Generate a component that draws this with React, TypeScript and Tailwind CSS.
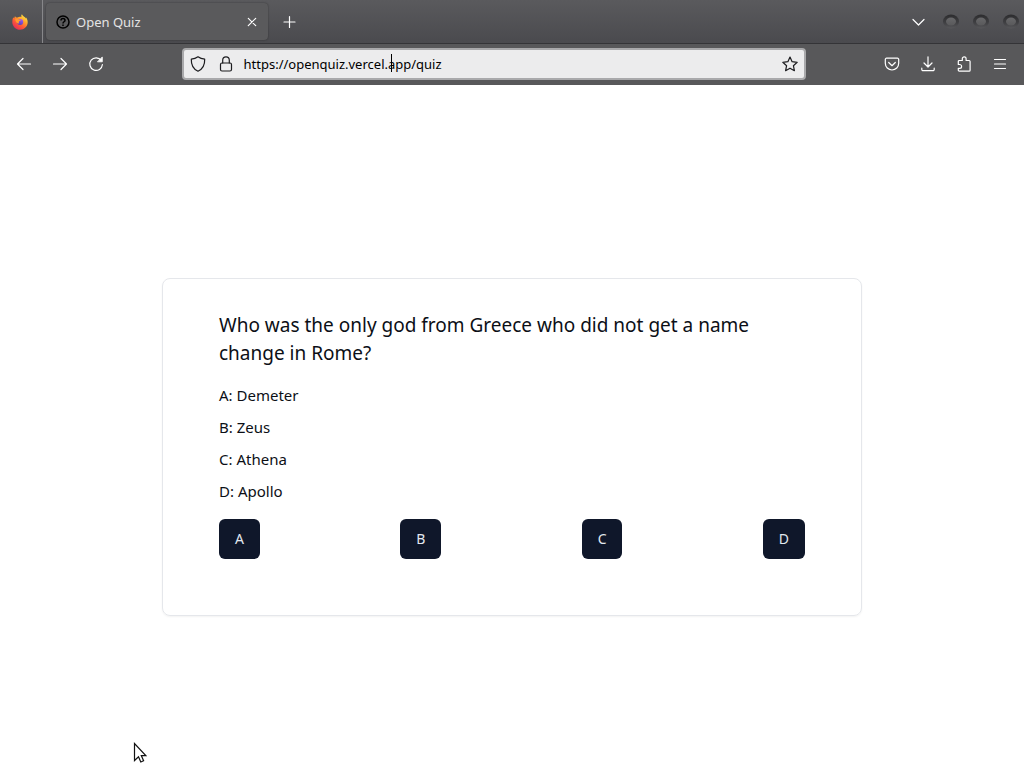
import React, { useState } from 'react';

interface Option {
  letter: string;
  text: string;
}

const question = 'Who was the only god from Greece who did not get a name change in Rome?';

const options: Option[] = [
  { letter: 'A', text: 'Demeter' },
  { letter: 'B', text: 'Zeus' },
  { letter: 'C', text: 'Athena' },
  { letter: 'D', text: 'Apollo' },
];

// Shared wrapper for the thin 16px browser icons
function Icon({ children }: { children: React.ReactNode }) {
  return (
    <svg
      className="w-4 h-4 shrink-0"
      viewBox="0 0 16 16"
      fill="none"
      stroke="currentColor"
      strokeWidth="1.2"
      strokeLinecap="round"
      strokeLinejoin="round"
      aria-hidden="true"
    >
      {children}
    </svg>
  );
}

function FirefoxLogo() {
  return (
    <svg className="w-4 h-4 shrink-0" viewBox="0 0 16 16" aria-hidden="true">
      <defs>
        <linearGradient id="flame" x1="0.85" y1="0.05" x2="0.2" y2="0.95">
          <stop offset="0" stopColor="#fff04a" />
          <stop offset="0.35" stopColor="#ffa32b" />
          <stop offset="0.65" stopColor="#ff5a36" />
          <stop offset="1" stopColor="#e52a5c" />
        </linearGradient>
        <linearGradient id="globe" x1="0.7" y1="0" x2="0.3" y2="1">
          <stop offset="0" stopColor="#a65cf0" />
          <stop offset="1" stopColor="#5340b8" />
        </linearGradient>
      </defs>
      <path
        fill="url(#flame)"
        d="M9.9.3c-.7.9-.8 1.8-.4 2.8-1.4-.5-2.900-.3-4.100.5C4.400 3.500 3.500 3 3 2.200c-.5.6-.7 1.300-.6 2.100C1.800 4.200 1.400 3.800 1.200 3.300.5 4.900.2 6.600.3 8.400c.3 4.100 3.600 7.300 7.700 7.300s7.700-3.300 7.700-7.500c0-2.100-.7-3.800-1.900-5 .1.500.1.9 0 1.300C12.900 2.800 10.700 2.200 9.900.3z"
      />
      <circle cx="8.200" cy="7.900" r="3" fill="url(#globe)" />
      <path fill="#ff9a2e" d="M3.200 5.200c1.300-.6 2.700-.5 3.700.3l1.900.6c0 .7-1 1.100-1.800 1.300-.4.6-.3 1.300.3 1.900-1.600.5-3.600-.7-4.100-4.100z" />
    </svg>
  );
}

// Round window buttons of the desktop theme
function WindowButton({ label }: { label: string }) {
  return (
    <button aria-label={label} className="w-[18px] h-4 shrink-0">
      <svg className="w-[18px] h-4" viewBox="0 0 18 16" aria-hidden="true">
        <defs>
          <linearGradient id="ring" x1="0" y1="0" x2="0" y2="1">
            <stop offset="0" stopColor="#2c2c2e" />
            <stop offset="0.6" stopColor="#404043" />
            <stop offset="1" stopColor="#58585b" />
          </linearGradient>
          <linearGradient id="knob" x1="0" y1="0" x2="0" y2="1">
            <stop offset="0" stopColor="#68686a" />
            <stop offset="1" stopColor="#59595b" />
          </linearGradient>
        </defs>
        <ellipse cx="9" cy="7.500" rx="8" ry="7" fill="url(#ring)" />
        <ellipse cx="9" cy="7.500" rx="5" ry="4" fill="url(#knob)" />
      </svg>
    </button>
  );
}

function TabStrip() {
  return (
    <div className="h-11 flex items-stretch border-b border-[#343437] bg-linear-to-b from-[#5a5a5d] to-[#4a4a4e]">
      <button aria-label="Firefox View" className="w-[43px] pl-3 flex items-center border-r border-[#87878a]">
        <FirefoxLogo />
      </button>
      <div className="my-[3px] ml-[3px] w-[222px] flex items-center gap-1.5 pl-2.5 pr-2 rounded bg-[#5a5a5c] shadow-[0_0_2px_rgba(0,0,0,0.4)]">
        <svg className="w-3.5 h-3.5 shrink-0 text-black" viewBox="0 0 14 14" fill="none" stroke="currentColor" strokeWidth="1.5" aria-hidden="true">
          <circle cx="7" cy="7" r="6" />
          <path d="M5 5.600C5 4.300 5.800 3.600 7 3.600s2 .7 2 1.800c0 1.300-2 1.500-2 3" />
          <path d="M7 9.500v1.500" />
        </svg>
        <span className="flex-1 truncate text-[13px] leading-5 text-[#e4e4e4]">Open Quiz</span>
        <button aria-label="Close tab">
          <Icon>
            <path d="M4.300 4.300l7.400 7.400M11.700 4.300l-7.400 7.400" />
          </Icon>
        </button>
      </div>
      <button aria-label="New tab" className="ml-3.5 flex items-center">
        <Icon>
          <path d="M7.500 2.500v11M2 8h11" />
        </Icon>
      </button>
      <div className="ml-auto flex items-center gap-3 pr-1">
        <button aria-label="List all tabs" className="mr-1">
          <Icon>
            <path d="M3 5.500l5.500 5.500L14 5.500" />
          </Icon>
        </button>
        <WindowButton label="Minimize" />
        <WindowButton label="Maximize" />
        <WindowButton label="Close" />
      </div>
    </div>
  );
}

function NavBar() {
  const [url, setUrl] = useState('https://openquiz.vercel.app/quiz');

  return (
    <div className="px-4 pt-1 pb-[5px] flex items-center justify-between bg-[#58585a]">
      <div className="flex items-center gap-5">
        <button aria-label="Back">
          <Icon>
            <path d="M14.500 8h-13M7 2.500L1.500 8 7 13.500" />
          </Icon>
        </button>
        <button aria-label="Forward">
          <Icon>
            <path d="M1.500 8h13M9 2.500L14.500 8 9 13.500" />
          </Icon>
        </button>
        <button aria-label="Reload">
          <Icon>
            <path d="M13.300 4.500A6.300 6.300 0 1 0 14.400 8.500" />
            <path d="M14.300 1.300v4.500H9.800z" fill="currentColor" strokeWidth="0.8" />
          </Icon>
        </button>
      </div>

      <div className="w-[63%] h-8 px-1.5 flex items-center gap-2.5 rounded-sm border-2 border-[#a9a9ab] bg-[#ececed] text-[#1c1c1f]">
        <div className="flex items-center gap-3">
          <Icon>
            <path d="M8 .8c2 1.500 4.300 2.200 6.700 2.400C14.900 9 12.800 13 8 15.200 3.200 13 1.100 9 1.300 3.200 3.700 3 6 2.300 8 .8z" />
          </Icon>
          <Icon>
            <rect x="2.500" y="7" width="11" height="8" rx="1.500" />
            <path d="M4.700 7V4.200a3.300 3.300 0 0 1 6.600 0V7" />
          </Icon>
        </div>
        <div className="relative flex-1">
          <input
            aria-label="Address"
            className="block w-full text-[13px] leading-5 text-black outline-none"
            value={url}
            onChange={(e) => setUrl(e.target.value)}
          />
          {/* Text caret */}
          <span className="absolute left-[147px] top-0 w-px h-[18px] bg-black"></span>
        </div>
        <button aria-label="Bookmark this page">
          <Icon>
            <path d="M8 1l2.100 4.700 5.100.6-3.800 3.400 1 5L8 12.200l-4.400 2.500 1-5L.8 6.300l5.100-.6z" />
          </Icon>
        </button>
      </div>

      <div className="flex items-center gap-5">
        <button aria-label="Save to Pocket">
          <Icon>
            <path d="M2.500 2.200h11a1.200 1.200 0 0 1 1.200 1.200V7.300a6.700 6.700 0 0 1-13.400 0V3.400a1.200 1.200 0 0 1 1.200-1.200z" />
            <path d="M4.700 6.500L8 9.700l3.300-3.200" />
          </Icon>
        </button>
        <button aria-label="Downloads">
          <Icon>
            <path d="M8 .8v10M4 7l4 4 4-4M1.800 12.200v1.300a1.200 1.200 0 0 0 1.200 1.200h10a1.200 1.200 0 0 0 1.200-1.200v-1.300" />
          </Icon>
        </button>
        <button aria-label="Extensions">
          <Icon>
            <path d="M2.300 7.300V5.500a1 1 0 0 1 1-1h3V2.700a1.900 1.900 0 0 1 3.800 0v1.800h3a1 1 0 0 1 1 1v8.700a1 1 0 0 1-1 1H3.300a1 1 0 0 1-1-1v-1.900h1.400a1.900 1.900 0 0 0 0-3.800H2.300z" />
          </Icon>
        </button>
        <button aria-label="Open application menu">
          <Icon>
            <path d="M2.500 3.500h11M2.500 8h11M2.500 12.500h11" />
          </Icon>
        </button>
      </div>
    </div>
  );
}

export default function App() {
  return (
    <div className="relative min-h-screen flex flex-col bg-white font-['Noto_Sans',sans-serif]">
      {/* Browser */}
      <header className="text-white">
        <TabStrip />
        <NavBar />
      </header>

      {/* Quiz */}
      <main className="flex-1 flex items-center justify-center px-4 pt-10">
        <section className="w-full max-w-[700px] px-14 pt-8 pb-14 rounded-lg border border-[#e5e7eb] shadow-xs text-[#0c0f16]">
          <h1 className="mb-4 text-[19px] leading-7">{question}</h1>
          <ul className="mb-4 flex flex-col gap-2 text-[15px] leading-6">
            {options.map((option) => (
              <li key={option.letter}>
                {option.letter}: {option.text}
              </li>
            ))}
          </ul>
          <div className="flex justify-between">
            {options.map((option) => (
              <button key={option.letter} className="h-10 px-4 rounded-md bg-[#0f172a] text-sm text-slate-200">
                {option.letter}
              </button>
            ))}
          </div>
        </section>
      </main>

      {/* Mouse pointer */}
      <svg className="absolute left-[133px] top-[742px] w-3.5 h-[22px]" viewBox="0 0 14 22" aria-hidden="true">
        <path d="M1.500 1.500v17l4-3.800 2.300 5.300 2.800-1.200-2.300-5.200h4.500z" fill="#fff" stroke="#111" strokeWidth="1.2" />
      </svg>
    </div>
  );
}
